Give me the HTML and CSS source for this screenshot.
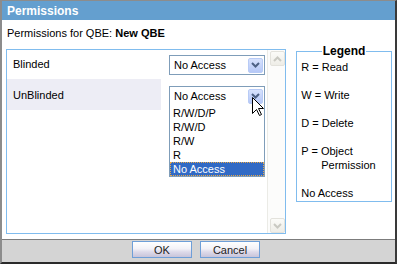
FILE: index.html
```html
<!DOCTYPE html>
<html lang="en">
<head>
    <meta charset="UTF-8">
    <title>Permissions</title>
    <link rel="stylesheet" href="styles.css">
</head>
<body>
    <div class="dialog">
        <div class="titlebar">Permissions</div>

        <div class="content">
            <p class="caption">Permissions for QBE: <b>New QBE</b></p>

            <div class="main">
                <div class="grid-panel">
                    <div class="rows">
                        <div class="row row-first">
                            <div class="label">Blinded</div>
                            <div class="cell">
                                <div class="select">
                                    <span>No Access</span>
                                    <span class="arrow"><svg width="9" height="6" viewBox="0 0 9 6"><path d="M1 1 L4.5 4.5 L8 1" fill="none" stroke="#4d6185" stroke-width="2"/></svg></span>
                                </div>
                            </div>
                        </div>
                        <div class="row row-second">
                            <div class="label shaded">UnBlinded</div>
                            <div class="cell">
                                <div class="select open">
                                    <span>No Access</span>
                                    <span class="arrow"><svg width="9" height="6" viewBox="0 0 9 6"><path d="M1 1 L4.5 4.5 L8 1" fill="none" stroke="#4d6185" stroke-width="2"/></svg></span>
                                    <ul class="options">
                                        <li>R/W/D/P</li>
                                        <li>R/W/D</li>
                                        <li>R/W</li>
                                        <li>R</li>
                                        <li class="selected">No Access</li>
                                    </ul>
                                </div>
                            </div>
                        </div>
                    </div>
                    <div class="scrollbar">
                        <span class="sb-btn"><svg width="9" height="6" viewBox="0 0 9 6"><path d="M1 5 L4.5 1.5 L8 5" fill="none" stroke="#c9c9c2" stroke-width="2"/></svg></span>
                        <span class="sb-btn"><svg width="9" height="6" viewBox="0 0 9 6"><path d="M1 1 L4.5 4.5 L8 1" fill="none" stroke="#c9c9c2" stroke-width="2"/></svg></span>
                    </div>
                </div>

                <fieldset class="legend">
                    <legend>Legend</legend>
                    <p class="first">R = Read</p>
                    <p>W = Write</p>
                    <p>D = Delete</p>
                    <p class="hang">P = Object Permission</p>
                    <p>No Access</p>
                </fieldset>
            </div>
        </div>

        <div class="footer">
            <button>OK</button>
            <button>Cancel</button>
        </div>

        <svg class="cursor" width="13" height="20" viewBox="0 0 13 20"><path d="M0.5 0.5 V16.5 L4.5 12.5 L7.5 18.5 L9.5 17.5 L6.5 11.5 L11.5 11.5 Z" fill="#fff" stroke="#000"/></svg>
    </div>
</body>
</html>
```

FILE: styles.css
```css
body {
    margin: 0;
    font-family: "Liberation Sans", Arial, sans-serif;
    font-size: 11px;
    color: #000;
    background: #fff;
}
.dialog {
    position: relative;
    width: 397px;
    height: 264px;
    box-sizing: border-box;
    border-left: 2px solid #8c8c8c;
    border-top: 1px solid #8c8c8c;
    border-right: 2px solid #3a3a3a;
    border-bottom: 2px solid #2a2a2a;
    display: flex;
    flex-direction: column;
}
.titlebar {
    height: 19px;
    line-height: 20px;
    background: #649fcf;
    color: #fff;
    font-weight: bold;
    font-size: 12px;
    padding-left: 5px;
}
.content {
    flex: 1;
    padding: 6px 3px 0 4px;
}
.caption {
    margin: 0 0 4px;
    line-height: 14px;
    padding-left: 1px;
}
.main {
    display: flex;
    align-items: flex-start;
    gap: 10px;
}
.grid-panel {
    margin-top: 5px;
    width: 281px;
    height: 185px;
    box-sizing: border-box;
    border: 1px solid #80bcee;
    display: flex;
}
.rows {
    flex: 1;
}
.row {
    display: flex;
    gap: 2px;
}
.row-first {
    height: 28px;
    margin-bottom: 1px;
}
.row-second {
    height: 31px;
}
.label {
    width: 154px;
    padding-left: 6px;
    box-sizing: border-box;
    display: flex;
    align-items: center;
}
.shaded {
    background: #ededf5;
}
.cell {
    flex: 1;
    padding-left: 6px;
}
.row-first .cell {
    padding-top: 5px;
}
.row-second .cell {
    padding-top: 7px;
}
.select {
    position: relative;
    width: 96px;
    height: 20px;
    box-sizing: border-box;
    border: 1px solid #7f9db9;
    background: #fff;
    display: flex;
    align-items: center;
    justify-content: space-between;
    padding: 0 1px 0 4px;
}
.arrow {
    width: 15px;
    height: 15px;
    box-sizing: border-box;
    border: 1px solid #b8cbf6;
    border-radius: 2px;
    background: linear-gradient(to bottom, #d7e2fd, #b6c8f7);
    display: flex;
    align-items: center;
    justify-content: center;
}
.options {
    position: absolute;
    top: 100%;
    left: -1px;
    width: 96px;
    box-sizing: border-box;
    margin: 0;
    padding: 1px 0 0;
    list-style: none;
    background: #fff;
    border: 1px solid #7f9db9;
    border-top: none;
    z-index: 2;
}
.options li {
    height: 14px;
    line-height: 14px;
    padding-left: 3px;
}
.options .selected {
    background: #316ac5;
    color: #fff;
    outline: 1px dotted #e8a848;
    outline-offset: -1px;
}
.scrollbar {
    width: 18px;
    box-sizing: border-box;
    border-left: 1px solid #ebebe6;
    background: #fcfcfb;
    padding: 1px 0 0 2px;
    display: flex;
    flex-direction: column;
    justify-content: space-between;
}
.sb-btn {
    width: 15px;
    height: 15px;
    box-sizing: border-box;
    border: 1px solid #e3e2dc;
    border-radius: 2px;
    background: linear-gradient(to bottom, #fbfbf8, #eeede7);
    display: flex;
    align-items: center;
    justify-content: center;
}
.legend {
    width: 96px;
    height: 158px;
    box-sizing: border-box;
    margin: 0;
    padding: 0 4px;
    border: 1px solid #80bcee;
}
.legend legend {
    margin: 0 auto;
    padding: 0 1px;
    font-weight: bold;
    font-size: 12px;
    line-height: 14px;
}
.legend p {
    margin: 0 0 14px;
    line-height: 14px;
}
.legend .first {
    margin-top: 2px;
}
.legend .hang {
    padding-left: 20px;
    text-indent: -20px;
}
.footer {
    height: 21px;
    border-top: 1px solid #7c7c7c;
    background: #d4d4d4;
    padding: 1px 0 0 130px;
    display: flex;
    gap: 8px;
}
.footer button {
    width: 60px;
    height: 17px;
    padding: 0;
    border: 1px solid #6e9fd8;
    font-family: "Liberation Sans", Arial, sans-serif;
    font-size: 11px;
    color: #222;
    background: linear-gradient(to bottom, #ffffff 0%, #f3f2f7 45%, #dedbea 65%, #c8c4da 100%);
}
.cursor {
    position: absolute;
    left: 250px;
    top: 96px;
    z-index: 3;
}
```
